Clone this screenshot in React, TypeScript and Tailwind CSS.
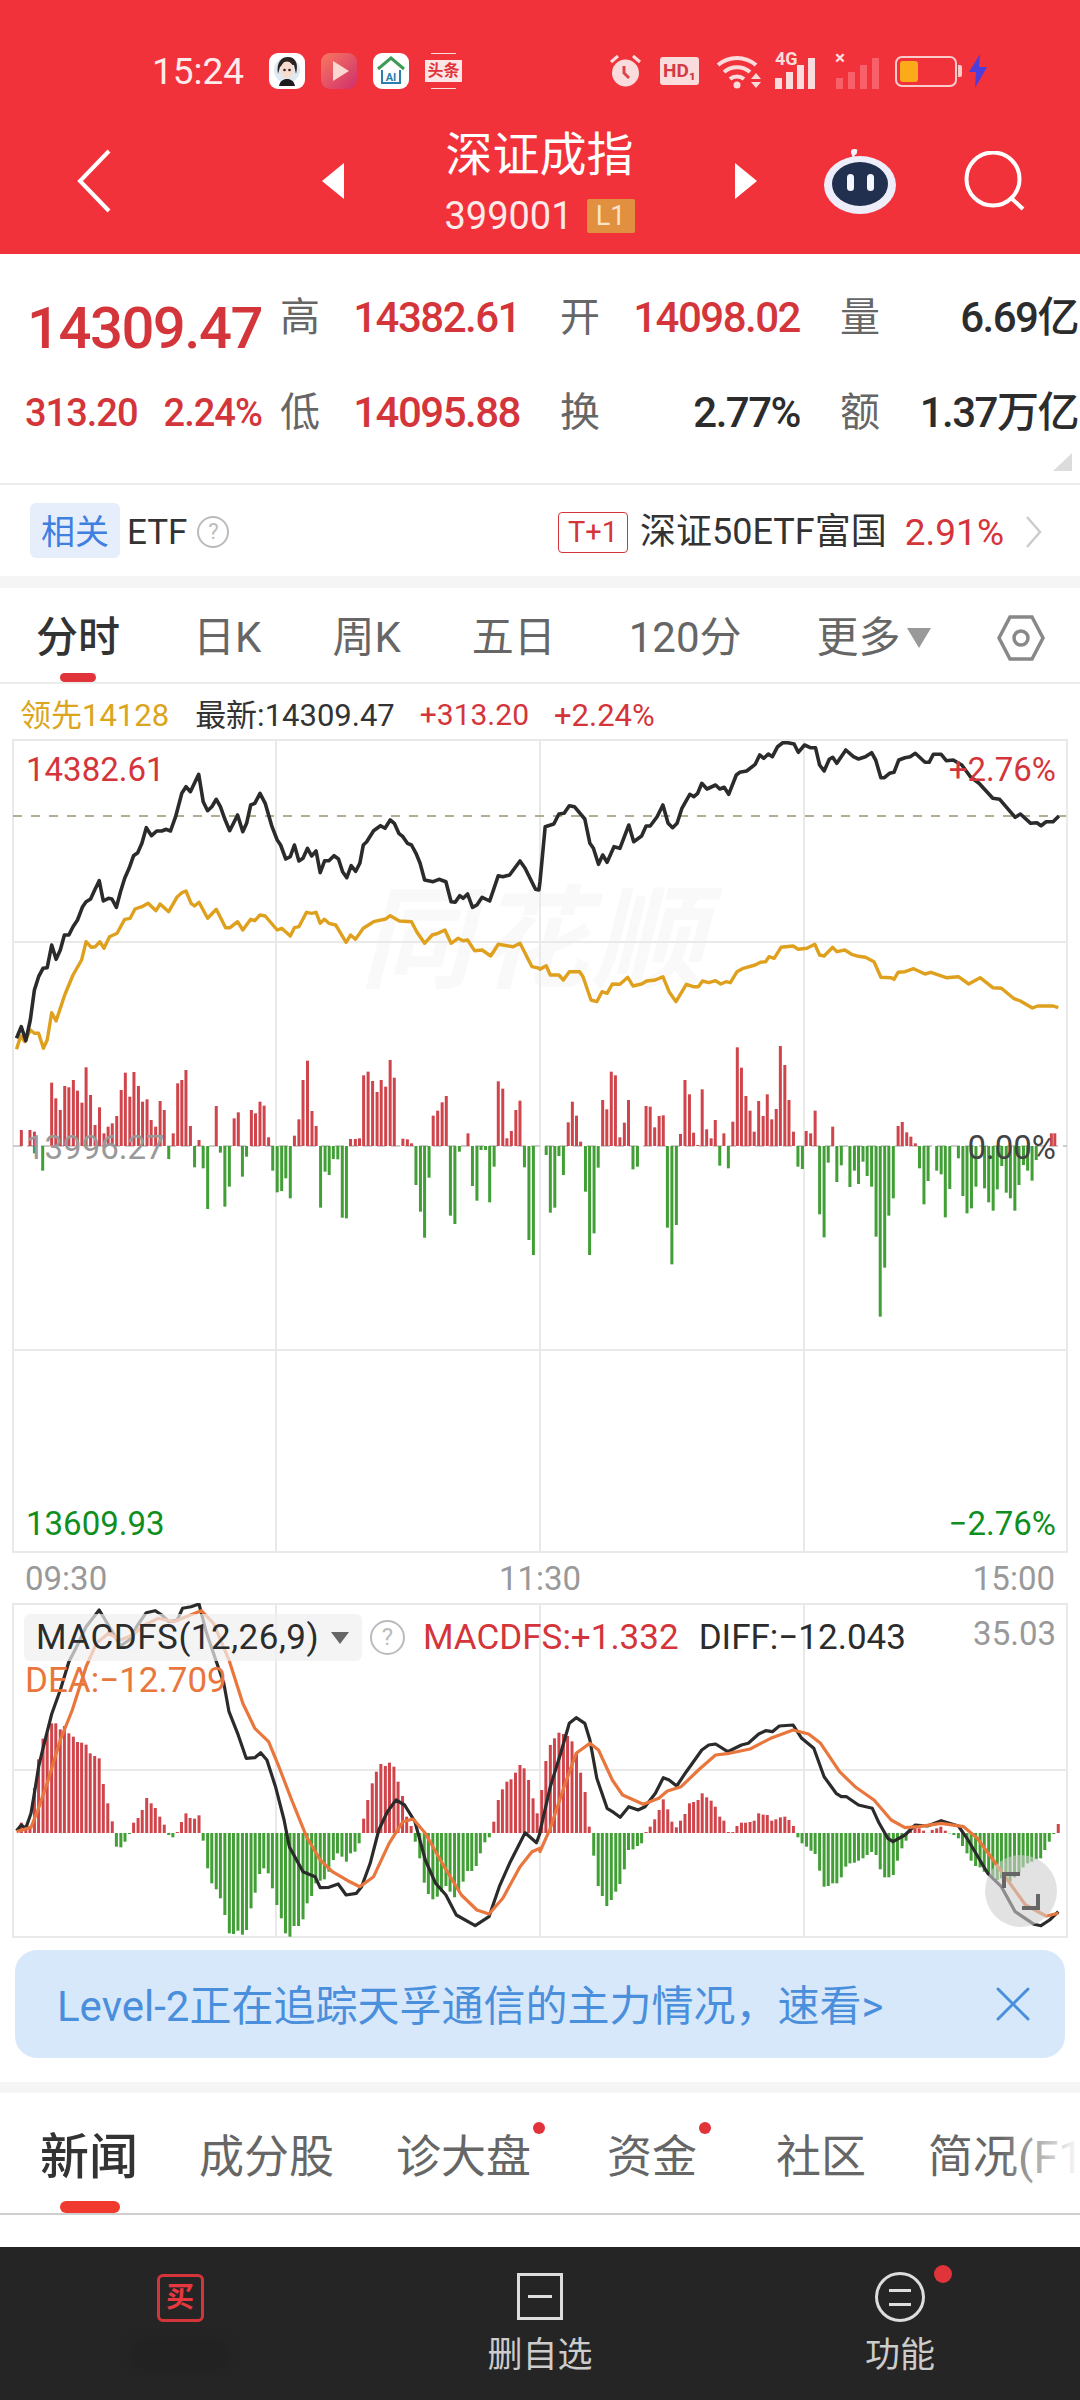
import { X } from "lucide-react";

// all chart data is flat [x, y, x, y...] read from the crops, scale 2.904 across and 3 down
const SX = 2.904;
const SY = 3;

const line = (flat: number[], x0: number, y0: number) => {
  const out: string[] = [];
  for (let i = 0; i < flat.length; i += 2) {
    out.push(`${(x0 + flat[i] / SX).toFixed(1)},${(y0 + flat[i + 1] / SY).toFixed(1)}`);
  }
  return out.join(" ");
};

const priceA = [48,1015,62,980,75,1022,88,960,100,870,112,830,125,805,137,803,150,735,163,778,175,750,187,705,200,705,212,680,225,660,240,620,250,605,263,597,275,570,288,542,300,603,315,595,325,597,338,622,350,575,362,535,375,505,388,467,400,458,412,430,425,383,440,407,455,393,470,393,483,388,495,393,510,350,528,280,540,260,553,275,577,223,590,305,603,332,615,320,628,298,640,320,653,358,667,392,690,345,705,395,716,370,728,315,740,310,755,280,770,310,790,380,805,420,815,435,830,477,843,470,855,435,868,483,880,475,893,445,905,468,918,453,930,518,943,482,955,482,970,467,983,477,995,515,1007,533,1020,497,1033,514,1045,490,1055,435,1065,425,1085,392,1105,377,1118,385,1133,360,1145,370,1158,400,1170,410,1183,430,1195,435,1208,460,1220,490,1233,540,1258,545,1275,538,1295,545,1310,605,1322,607,1335,587,1345,595,1358,582,1372,622,1385,615,1400,592,1422,603,1447,527,1460,530,1480,525,1510,483,1525,505,1555,568,1565,570];
const priceB = [0,545,15,380,40,372,55,342,70,340,85,317,100,320,130,357,145,430,155,445,170,493,182,465,195,487,215,440,232,445,258,375,272,425,295,408,308,378,320,378,340,350,357,315,372,370,385,383,398,370,412,325,435,283,447,290,458,280,470,250,485,267,510,255,522,267,535,262,548,283,570,225,580,217,600,213,625,193,638,165,650,175,663,162,675,170,690,140,705,128,720,128,738,132,750,157,768,135,785,143,800,143,812,195,825,213,840,178,850,172,862,190,888,150,910,170,925,177,945,170,963,158,975,180,990,233,1000,233,1015,220,1028,217,1042,180,1060,173,1075,170,1090,160,1118,187,1130,187,1142,163,1165,163,1180,182,1200,180,1225,195,1250,230,1275,250,1315,295,1335,298,1380,352,1395,342,1425,370,1443,368,1455,377,1470,365,1490,365,1507,348];
const avgA = [48,1048,60,1008,72,1025,88,990,100,1000,112,1000,126,1045,137,1020,150,938,163,963,188,885,212,825,237,780,250,725,265,742,277,740,290,725,302,745,318,710,340,700,362,658,378,655,392,627,412,620,430,610,453,632,465,612,490,635,515,590,530,577,540,573,555,610,565,618,578,607,603,655,628,628,655,683,668,683,690,665,705,690,728,658,740,662,755,645,770,648,805,690,818,685,843,708,855,683,868,680,890,637,905,640,918,637,930,670,942,658,955,670,975,675,1005,727,1018,705,1032,718,1055,685,1085,665,1120,657,1133,647,1160,663,1195,665,1210,695,1233,730,1255,705,1272,700,1292,690,1310,730,1330,715,1345,722,1358,720,1378,752,1400,750,1425,768,1447,733,1490,740,1510,730,1530,770,1545,800,1568,805];
const avgB = [0,808,18,797,30,825,55,825,68,840,85,815,115,815,125,830,148,900,165,905,180,875,195,880,210,852,232,853,255,832,270,858,295,852,310,843,335,840,357,830,375,875,395,905,425,853,445,860,460,860,472,843,490,848,510,842,525,852,540,845,553,848,572,815,590,805,625,795,640,787,655,785,665,770,680,775,700,742,735,738,750,748,775,745,798,733,812,765,825,768,850,742,862,755,885,750,905,763,925,769,945,772,970,785,990,832,1020,833,1028,838,1040,817,1060,815,1085,806,1118,822,1135,817,1180,833,1215,830,1245,852,1278,833,1315,863,1340,865,1375,895,1395,903,1430,924,1445,918,1490,918,1505,923];

const volRedA = [62,1290,87,1290,100,1295,150,1148,162,1195,175,1230,188,1158,200,1162,213,1140,225,1172,238,1208,250,1102,263,1185,276,1275,289,1222,302,1300,314,1280,326,1270,339,1248,352,1170,364,1118,377,1190,389,1116,402,1158,414,1205,427,1198,439,1260,452,1280,465,1203,477,1230,503,1300,516,1150,528,1140,540,1110,553,1278,578,1320,628,1218,680,1255,692,1237,730,1230,742,1240,755,1205,767,1217,780,1312,855,1307,868,1258,880,1140,893,1082,906,1233,918,1278,1018,1317,1032,1317,1044,1315,1056,1126,1069,1115,1082,1143,1095,1176,1107,1140,1120,1160,1133,1080,1145,1133,1170,1316,1183,1318,1195,1330,1258,1247,1271,1232,1284,1207,1296,1188,1359,1300,1447,1144,1460,1166,1472,1315,1485,1293,1498,1230,1510,1202];
const volRedB = [82,1267,94,1205,106,1247,118,1325,182,1200,194,1228,207,1115,219,1126,232,1312,245,1268,257,1200,308,1218,320,1220,333,1282,346,1248,358,1246,408,1302,421,1140,434,1183,446,1298,458,1335,471,1168,484,1288,497,1315,509,1260,534,1300,560,1265,573,1042,585,1103,598,1188,610,1232,622,1295,635,1203,648,1248,660,1183,673,1258,686,1227,698,1038,711,1095,723,1200,736,1295,773,1293,786,1300,799,1232,850,1280,1040,1278,1052,1266,1065,1297,1077,1310,1090,1330,1485,1300,1495,1300];
const volGreenA = [100,70,124,122,490,87,565,112,590,115,603,237,640,68,653,230,666,170,704,140,716,80,792,122,805,187,818,183,830,145,843,205,931,233,944,125,956,135,968,87,981,88,994,263,1006,265,1208,165,1221,245,1233,323,1246,143,1308,257,1321,282,1334,65,1372,168,1385,212,1397,60,1410,60,1422,217,1435,110,1523,112,1536,330,1549,375];
const volGreenB = [18,75,30,248,43,233,55,78,68,135,132,185,144,375,157,310,169,113,270,118,283,110,370,293,383,403,396,285,522,107,547,115,749,110,762,117,812,253,825,322,837,98,862,156,875,106,900,171,913,122,925,162,938,95,950,138,963,170,976,320,988,560,1001,413,1013,257,1026,205,1102,115,1115,223,1127,153,1152,122,1165,133,1177,262,1190,177,1215,85,1228,198,1240,250,1253,235,1266,170,1291,175,1303,217,1316,242,1328,178,1341,108,1354,188,1366,205,1379,242,1391,165,1404,105,1416,122,1429,152,1441,90];

const macdBarsA = [62,698,75,708,87,708,100,594,112,508,125,446,137,430,150,400,162,400,175,418,187,408,200,430,213,440,225,456,237,458,250,464,262,490,275,498,288,505,300,582,313,640,326,694,338,770,351,772,363,755,376,732,388,698,401,684,413,660,426,624,439,640,451,654,464,680,477,704,490,735,502,742,515,726,527,696,540,670,552,684,565,686,578,676,590,752,603,835,615,880,628,898,640,925,653,975,666,1030,678,1032,691,1022,704,1034,716,1020,729,955,741,908,754,852,766,835,779,850,791,895,804,945,817,985,829,1030,842,1040,854,1008,867,1008,880,988,892,940,905,918,917,880,930,872,942,868,955,845,968,810,980,790,993,800,1006,815,1018,790,1031,785,1043,760,1056,686,1068,630,1081,580,1093,545,1106,522,1119,528,1131,518,1144,530,1156,575,1169,618,1181,680,1194,708,1206,755,1219,805,1232,878,1244,912,1257,928,1270,920,1282,905,1295,888,1307,905,1320,922,1332,900,1345,875,1358,843,1370,843,1383,828,1395,790,1408,757,1421,742,1434,695,1447,630,1459,598,1472,575,1484,568,1497,548,1510,525,1522,535,1535,570,1548,625,1560,670];
const macdBarsB = [5,600,17,513,30,465,42,445,55,428,68,432,80,438,93,454,106,490,118,548,131,606,143,710,156,797,169,888,181,918,194,948,207,930,220,905,232,882,245,838,257,780,270,778,283,768,295,760,308,726,320,710,333,688,346,660,358,628,371,658,383,695,396,712,408,692,421,672,434,640,446,636,459,630,471,610,484,622,497,632,509,650,522,680,534,692,547,726,560,726,572,708,585,698,597,698,610,696,622,692,635,670,648,674,660,675,673,692,685,688,698,682,711,680,723,690,736,708,749,742,761,760,774,770,787,782,799,792,812,842,825,890,837,888,850,880,862,880,875,862,888,830,900,820,913,818,925,812,938,805,950,795,963,786,976,795,988,838,1001,862,1013,862,1026,855,1038,812,1051,775,1063,752,1076,722,1089,708,1101,715,1114,722,1139,720,1152,715,1164,710,1177,722,1190,730,1202,735,1215,745,1227,768,1240,790,1252,812,1265,828,1278,832,1290,845,1303,855,1315,860,1328,870,1340,865,1353,860,1365,875,1378,862,1391,848,1403,832,1416,820,1428,815,1441,808,1454,805,1466,780,1479,755,1492,732,1505,702];

const diffA = [48,722,62,705,75,715,90,670,100,610,112,530,125,475,150,372,175,300,200,215,225,165,250,110,288,60,320,115,350,168,375,150,400,105,425,68,450,62,470,75,490,95,515,90,530,55,555,50,578,42,600,130,630,220,650,280,665,365,690,430,715,505,740,503,757,488,775,510,800,590,825,690,840,770,880,845,915,860,930,893,955,892,982,882,1005,915,1035,910,1050,890,1075,820,1100,720,1125,665,1150,630,1175,645,1205,695,1235,810,1265,880,1295,915,1325,975,1380,1007,1420,980,1450,890,1480,820,1525,728,1558,758,1568,730];
const diffB = [0,725,30,590,60,490,85,400,105,383,130,400,145,450,165,565,195,655,215,668,233,682,258,650,285,660,305,650,335,610,358,563,375,570,397,588,425,545,470,480,490,465,510,462,545,485,585,465,605,460,635,432,655,422,675,425,695,408,735,405,760,445,795,475,825,560,860,610,875,620,890,620,925,645,965,655,985,700,1010,745,1025,755,1060,735,1090,705,1125,708,1165,692,1215,708,1240,745,1300,850,1340,890,1380,965,1435,1003,1455,1007,1480,990,1505,965];
const deaA = [48,725,90,712,110,660,140,570,175,450,210,360,250,230,280,160,315,130,350,150,385,135,420,105,460,85,505,95,540,80,585,62,620,100,665,210,705,340,740,415,780,455,810,530,845,625,890,740,930,810,965,845,1010,872,1045,890,1085,860,1130,760,1170,695,1200,687,1235,730,1290,830,1340,915,1385,960,1420,972,1460,925,1510,830,1545,785,1568,775];
const deaB = [0,785,30,715,70,590,105,490,145,460,170,480,210,570,240,615,300,643,345,625,370,603,410,590,460,540,510,495,550,490,610,477,670,445,735,420,780,432,815,460,870,545,915,590,970,630,1020,690,1060,713,1100,710,1165,700,1230,710,1270,745,1330,830,1410,945,1470,978,1505,970];

// one rect per pair, red above the base and green below it
const Bars = ({ data, x0, y0, base }: { data: number[]; x0: number; y0: number; base: number }) => {
  const rects = [];
  for (let i = 0; i < data.length; i += 2) {
    const y = y0 + data[i + 1] / SY;
    rects.push(
      <rect
        key={i}
        x={x0 + data[i] / SX - 1.5}
        y={Math.min(y, base)}
        width={3}
        height={Math.abs(y - base)}
        fill={y < base ? "#d0454b" : "#419f36"}
      />
    );
  }
  return <>{rects}</>;
};

const StatusBar = () => (
  <div className="flex items-center h-[100px] pt-[42px] pl-[152px] pr-[92px]">
    <span className="text-[37px] leading-none text-[#fdeaea] w-[93px]">15:24</span>
    <div className="flex items-center gap-[16px] ml-[24px]">
      <svg width="36" height="36" viewBox="0 0 36 36">
        <rect width="36" height="36" rx="9" fill="#fff" />
        <circle cx="18" cy="17" r="13" fill="#dfe9f2" />
        <path d="M9 21c-2-11 3-17 10-17s11 6 8 17l-2-9c-4 0-8-1-10-3-1 3-3 4-4 5z" fill="#2b2422" />
        <ellipse cx="18" cy="17" rx="6.5" ry="8.5" fill="#f9dcd0" />
        <circle cx="15.5" cy="17" r="1.3" fill="#2b2422" />
        <circle cx="20.5" cy="17" r="1.3" fill="#2b2422" />
        <path d="M10 33c1-5 4-7 8-7s7 2 8 7z" fill="#1d1d1f" />
      </svg>
      <svg width="36" height="36" viewBox="0 0 36 36">
        <defs>
          <linearGradient id="play" x1="0" y1="0" x2="1" y2="1">
            <stop offset="0" stopColor="#f9785f" />
            <stop offset="1" stopColor="#cf2f6e" />
          </linearGradient>
        </defs>
        <rect width="36" height="36" rx="9" fill="url(#play)" />
        <path d="M12 8l16 10-16 10z" fill="#fcd6d0" />
      </svg>
      <svg width="36" height="36" viewBox="0 0 36 36">
        <rect width="36" height="36" rx="9" fill="#fff" />
        <path d="M5 16L18 5l13 11" fill="none" stroke="#3f9a58" strokeWidth="3" />
        <path d="M9 17v13h18V17" fill="none" stroke="#2a7fb0" strokeWidth="2" />
        <text x="18" y="28" textAnchor="middle" fontSize="11" fontWeight="700" fill="#2a7fb0">AI</text>
      </svg>
      <div className="relative w-[37px] h-[36px] rounded-[9px] flex items-center justify-center">
        <div className="absolute top-0 left-[6px] right-[6px] h-[1px] bg-[#fbdcdc]" />
        <div className="absolute bottom-0 left-[6px] right-[6px] h-[1px] bg-[#fbdcdc]" />
        <span className="w-[37px] h-[22px] bg-[#fde6e6] text-[#e0343c] text-[16px] leading-[22px] font-bold text-center">头条</span>
      </div>
    </div>
    <div className="flex items-center ml-auto">
      <svg width="33" height="34" viewBox="0 0 33 34">
        <circle cx="16.5" cy="19" r="13.5" fill="#fbdcdc" />
        <path d="M2 8l7-6M31 8l-7-6" stroke="#fbdcdc" strokeWidth="3" />
        <path d="M15 12v7l5 5" fill="none" stroke="#d9434c" strokeWidth="3" />
      </svg>
      <span className="ml-[18px] w-[39px] h-[28px] rounded-[3px] bg-[#fbdcdc] text-[#d23a44] text-[19px] leading-[28px] font-bold text-center">HD₁</span>
      <svg className="ml-[18px]" width="45" height="36" viewBox="0 0 45 36">
        <path d="M1 12a29 29 0 0 1 38 0M7 19a20 20 0 0 1 26 0M13 26a11 11 0 0 1 14 0" fill="none" stroke="#fbdcdc" strokeWidth="4" />
        <circle cx="20" cy="32" r="3.5" fill="#fbdcdc" />
        <path d="M39 20l5 6H34zM34 29h10l-5 6z" fill="#fbdcdc" />
      </svg>
      <div className="relative ml-[13px] w-[47px] h-[36px]">
        <span className="absolute left-0 top-[-4px] text-[18px] leading-[20px] font-bold text-[#fbdcdc]">4G</span>
        <div className="absolute bottom-0 left-0 flex items-end gap-[4px]">
          <i className="block w-[7px] h-[11px] bg-[#fbdcdc]" />
          <i className="block w-[7px] h-[17px] bg-[#fbdcdc]" />
          <i className="block w-[7px] h-[24px] bg-[#fbdcdc]" />
          <i className="block w-[7px] h-[31px] bg-[#fbdcdc]" />
        </div>
      </div>
      <div className="relative ml-[14px] w-[44px] h-[36px]">
        <span className="absolute left-[-1px] top-[-5px] text-[19px] leading-[20px] font-bold text-[#fbdcdc]">×</span>
        <div className="absolute bottom-0 left-0 flex items-end gap-[5px]">
          <i className="block w-[7px] h-[11px] bg-[#f8606a]" />
          <i className="block w-[7px] h-[17px] bg-[#f8606a]" />
          <i className="block w-[7px] h-[24px] bg-[#f8606a]" />
          <i className="block w-[7px] h-[31px] bg-[#f8606a]" />
        </div>
      </div>
      <div className="flex items-center ml-[15px]">
        <div className="w-[62px] h-[31px] rounded-[7px] border-2 border-[#fbcaca] p-[3px]">
          <div className="w-[18px] h-full rounded-[3px] bg-[#fbab1a]" />
        </div>
        <div className="w-[4px] h-[12px] ml-[1px] bg-[#fbcaca] rounded-r-[2px]" />
      </div>
      <svg className="ml-[6px]" width="20" height="34" viewBox="0 0 20 34">
        <path d="M12 0L1 18h7l-1 16 12-21h-8z" fill="#4d3ddb" />
      </svg>
    </div>
  </div>
);

const HeaderNav = () => (
  <div className="flex items-center h-[154px] pt-[8px] pl-[76px]">
    <svg width="36" height="64" viewBox="0 0 36 64">
      <path d="M33 2L4 32l29 30" fill="none" stroke="#fff" strokeWidth="4" />
    </svg>
    <svg className="ml-[210px]" width="22" height="36" viewBox="0 0 22 36">
      <path d="M22 0v36L0 18z" fill="#fff" />
    </svg>
    <div className="w-[391px] flex flex-col items-center text-white">
      <span className="text-[47px] leading-[58px]">深证成指</span>
      <div className="flex items-center gap-[14px] mt-[12px]">
        <span className="text-[38px] leading-[40px] text-[#fdeaea]">399001</span>
        <span className="w-[48px] h-[34px] rounded-[2px] bg-[#e0903f] text-[#fbe3c8] text-[27px] leading-[34px] text-center">L1</span>
      </div>
    </div>
    <svg width="22" height="36" viewBox="0 0 22 36">
      <path d="M0 0v36l22-18z" fill="#fff" />
    </svg>
    <svg className="ml-[67px]" width="72" height="66" viewBox="0 0 72 66">
      <path d="M30 9c-3-5 0-8 3-6" fill="none" stroke="#e8e8f8" strokeWidth="2.5" />
      <circle cx="30" cy="4" r="3" fill="#f2f2fb" />
      <ellipse cx="36" cy="37" rx="36" ry="29" fill="#eeeefb" />
      <ellipse cx="36" cy="36" rx="28" ry="22" fill="#22304f" />
      <rect x="23" y="26" width="7" height="17" rx="3.5" fill="#f4f6ff" />
      <rect x="43" y="26" width="7" height="17" rx="3.5" fill="#f4f6ff" />
    </svg>
    <svg className="ml-[68px]" width="62" height="60" viewBox="0 0 62 60">
      <circle cx="29" cy="28" r="26.5" fill="none" stroke="#fff" strokeWidth="4" />
      <path d="M46 46l13 12" stroke="#fff" strokeWidth="4" />
    </svg>
  </div>
);

const Stat = ({ label, value, dark, className }: { label: string; value: string; dark?: boolean; className?: string }) => (
  <div className={`flex items-center justify-between ${className ?? ""}`}>
    <span className="text-[40px] leading-none text-[#666666]">{label}</span>
    <span className={`text-[42px] leading-none font-medium tracking-[-1.5px] ${dark ? "text-[#2c2c2c]" : "text-[#d4353a]"}`}>{value}</span>
  </div>
);

const Quote = () => (
  <div className="relative h-[231px] pt-[18px] border-b-2 border-[#ececec]">
    <div className="flex items-center h-[92px]">
      <div className="w-[280px] pl-[27px]">
        <span className="block mt-[20px] text-[58px] leading-none font-medium tracking-[-1.5px] text-[#d4353a]">14309.47</span>
      </div>
      <Stat className="w-[240px]" label="高" value="14382.61" />
      <Stat className="w-[240px] ml-[40px]" label="开" value="14098.02" />
      <Stat className="w-[238px] ml-[40px]" label="量" value="6.69亿" dark />
    </div>
    <div className="flex items-center h-[98px]">
      <div className="w-[280px] pl-[25px] flex gap-[26px] text-[38px] leading-none font-medium tracking-[-1px] text-[#d4353a]">
        <span>313.20</span>
        <span>2.24%</span>
      </div>
      <Stat className="w-[240px]" label="低" value="14095.88" />
      <Stat className="w-[240px] ml-[40px]" label="换" value="2.77%" dark />
      <Stat className="w-[238px] ml-[40px]" label="额" value="1.37万亿" dark />
    </div>
    <svg className="absolute right-[8px] bottom-[12px]" width="19" height="18" viewBox="0 0 19 18">
      <path d="M19 0v18H0z" fill="#dcdcdc" />
    </svg>
  </div>
);

const Related = () => (
  <div className="flex items-center h-[91px] pt-[3px] pl-[30px] pr-[38px]">
    <span className="w-[90px] h-[55px] mb-[3px] rounded-[6px] bg-[#e6eefc] text-[#3f7fe0] text-[34px] leading-[58px] text-center">相关</span>
    <span className="ml-[7px] text-[35px] leading-none text-[#333333]">ETF</span>
    <span className="ml-[10px] w-[32px] h-[32px] rounded-full border-2 border-[#bbbbbb] text-[#bbbbbb] text-[22px] leading-[28px] text-center">?</span>
    <span className="ml-auto w-[70px] h-[41px] rounded-[4px] border border-[#d4353a] text-[#d4353a] text-[29px] leading-[39px] text-center">T+1</span>
    <span className="ml-[12px] text-[36px] leading-none text-[#333333]">深证50ETF富国</span>
    <span className="ml-[18px] text-[37px] leading-none text-[#d4353a]">2.91%</span>
    <svg className="ml-[21px]" width="17" height="32" viewBox="0 0 17 32">
      <path d="M2 1l13 15L2 31" fill="none" stroke="#cccccc" strokeWidth="2.5" />
    </svg>
  </div>
);

const Periods = () => (
  <div className="relative flex items-center h-[96px] pt-[5px] border-b-2 border-[#ececec] text-[42px] leading-none text-[#666666]">
    <span className="ml-[36px] font-medium text-[#333333]">分时</span>
    <span className="ml-[73px]">日K</span>
    <span className="ml-[71px]">周K</span>
    <span className="ml-[71px]">五日</span>
    <span className="ml-[73px]">120分</span>
    <span className="ml-[75px]">更多</span>
    <svg className="ml-[6px]" width="24" height="20" viewBox="0 0 24 20">
      <path d="M0 0h24L12 20z" fill="#999999" />
    </svg>
    <svg className="ml-[66px]" width="48" height="46" viewBox="0 0 48 46">
      <path d="M13 2h22l11 21-11 21H13L2 23z" fill="none" stroke="#888888" strokeWidth="3.5" />
      <circle cx="24" cy="23" r="7" fill="none" stroke="#888888" strokeWidth="3.5" />
    </svg>
    <div className="absolute left-[60px] bottom-0 w-[36px] h-[9px] rounded-[5px] bg-[#e0333a]" />
  </div>
);

const PriceChart = () => (
  <div className="relative h-[814px]">
    <span className="absolute left-[360px] top-[146px] text-[112px] leading-none italic font-bold tracking-[4px] text-[#f9f9f9]">同花顺</span>
    <svg className="absolute inset-0" width="1080" height="814" viewBox="0 739 1080 814">
      <g stroke="#e9e9e9" strokeWidth="2" fill="none">
        <rect x="13" y="740" width="1054" height="812" />
        <path d="M276 740v812M540 740v812M804 740v812M13 942h1054M13 1350h1054" />
      </g>
      <path d="M13 816h1054" stroke="#b4ad94" strokeWidth="2" strokeDasharray="9 9" />
      <path d="M13 1146h1054" stroke="#cccccc" strokeWidth="2" strokeDasharray="9 5" />
      <Bars data={volRedA} x0={0} y0={700} base={1146} />
      <Bars data={volRedB} x0={540} y0={700} base={1146} />
      <Bars data={volGreenA} x0={0} y0={1130} base={1146} />
      <Bars data={volGreenB} x0={540} y0={1130} base={1146} />
      <polyline points={`${line(avgA, 0, 700)} ${line(avgB, 540, 700)}`} fill="none" stroke="#dfa01e" strokeWidth="3.4" strokeLinejoin="round" />
      <polyline points={`${line(priceA, 0, 700)} ${line(priceB, 540, 700)}`} fill="none" stroke="#2b2b2b" strokeWidth="3.6" strokeLinejoin="round" />
    </svg>
    <div className="absolute inset-x-[26px] top-[12px] flex justify-between text-[33px] leading-[38px] text-[#d4353a]">
      <span>14382.61</span>
      <span className="mr-[-2px]">+2.76%</span>
    </div>
    <div className="absolute inset-x-[26px] top-[390px] flex justify-between text-[33px] leading-[38px]">
      <span className="text-[#999999]">13996.27</span>
      <span className="mr-[-2px] text-[#444444]">0.00%</span>
    </div>
    <div className="absolute inset-x-[26px] bottom-[10px] flex justify-between text-[33px] leading-[38px] text-[#0f8f1f]">
      <span>13609.93</span>
      <span className="mr-[-2px]">−2.76%</span>
    </div>
  </div>
);

const MacdChart = () => (
  <div className="relative h-[336px]">
    <svg className="absolute inset-0" width="1080" height="336" viewBox="0 1603 1080 336">
      <g stroke="#e9e9e9" strokeWidth="2" fill="none">
        <rect x="13" y="1604" width="1054" height="333" />
        <path d="M276 1604v333M540 1604v333M804 1604v333M13 1770h1054" />
      </g>
      <Bars data={macdBarsA} x0={0} y0={1590} base={1833} />
      <Bars data={macdBarsB} x0={540} y0={1590} base={1833} />
      <polyline points={`${line(diffA, 0, 1590)} ${line(diffB, 540, 1590)}`} fill="none" stroke="#2b2b2b" strokeWidth="3.2" strokeLinejoin="round" />
      <polyline points={`${line(deaA, 0, 1590)} ${line(deaB, 540, 1590)}`} fill="none" stroke="#e9763c" strokeWidth="3.2" strokeLinejoin="round" />
    </svg>
    <div className="absolute left-[24px] top-[11px] flex items-center">
      <div className="flex items-center w-[338px] h-[47px] rounded-[6px] bg-[#efefef]/70 pl-[12px]">
        <span className="text-[35px] leading-none tracking-[0.5px] text-[#2c2c2c]">MACDFS(12,26,9)</span>
        <svg className="ml-[12px]" width="18" height="12" viewBox="0 0 18 12">
          <path d="M0 0h18L9 12z" fill="#666666" />
        </svg>
      </div>
      <span className="ml-[8px] w-[35px] h-[35px] rounded-full border-2 border-[#bbbbbb] text-[#bbbbbb] text-[24px] leading-[31px] text-center">?</span>
      <span className="ml-[18px] text-[35px] leading-none text-[#d4353a]">MACDFS:+1.332</span>
      <span className="ml-[20px] text-[35px] leading-none text-[#2c2c2c]">DIFF:−12.043</span>
    </div>
    <span className="absolute right-[24px] top-[12px] text-[33px] leading-[38px] text-[#999999]">35.03</span>
    <span className="absolute left-[25px] top-[59px] text-[35px] leading-[38px] text-[#e9763c]">DEA:−12.709</span>
    <div className="absolute left-[985px] top-[252px] w-[72px] h-[72px] rounded-full bg-[#cfcfcf]/60 flex items-center justify-center">
      <svg width="38" height="38" viewBox="0 0 38 38">
        <path d="M2 16V2h16M36 22v14H20" fill="none" stroke="#666666" strokeWidth="4" />
      </svg>
    </div>
  </div>
);

const Tab = ({ label, className, active, dot }: { label: string; className?: string; active?: boolean; dot?: boolean }) => (
  <span className={`relative leading-none ${active ? "text-[49px] font-medium text-[#333333]" : "text-[45px] text-[#666666]"} ${className ?? ""}`}>
    {label}
    {dot && <i className="absolute right-[-14px] top-[-13px] w-[12px] h-[12px] rounded-full bg-[#e0333a]" />}
  </span>
);

const NewsTabs = () => (
  <div className="relative flex items-center h-[122px] pt-[8px] border-b-2 border-[#cfcfcf] overflow-hidden whitespace-nowrap">
    <Tab className="ml-[40px]" label="新闻" active />
    <Tab className="ml-[61px]" label="成分股" />
    <Tab className="ml-[62px]" label="诊大盘" dot />
    <Tab className="ml-[76px]" label="资金" dot />
    <Tab className="ml-[79px]" label="社区" />
    <Tab className="ml-[62px]" label="简况(F10)" />
    <div className="absolute right-0 inset-y-0 w-[80px] bg-linear-to-l from-white to-transparent" />
    <div className="absolute left-[60px] bottom-0 w-[60px] h-[12px] rounded-[6px] bg-[#f0392f]" />
  </div>
);

const BottomBar = () => (
  <div className="grid grid-cols-3 h-[153px] bg-[#252525]">
    <div className="flex flex-col items-center pt-[27px]">
      <span className="w-[47px] h-[48px] rounded-[6px] border-[3px] border-[#d4353a] text-[#e8383f] text-[28px] leading-[42px] text-center font-bold">买</span>
      <div className="mt-[16px] w-[100px] h-[32px] rounded-full bg-[#222222] blur-[4px]" />
    </div>
    <div className="flex flex-col items-center pt-[26px]">
      <div className="w-[46px] h-[47px] border-[3px] border-[#dddddd] flex items-center justify-center">
        <i className="block w-[24px] h-[3px] bg-[#dddddd]" />
      </div>
      <span className="mt-[18px] text-[35px] leading-none text-[#cccccc]">删自选</span>
    </div>
    <div className="flex flex-col items-center pt-[25px]">
      <div className="relative w-[50px] h-[50px] rounded-full border-[3px] border-[#dddddd] flex flex-col items-center justify-center gap-[11px]">
        <i className="block w-[22px] h-[3px] bg-[#dddddd]" />
        <i className="block w-[22px] h-[3px] bg-[#dddddd]" />
        <i className="absolute right-[-30px] top-[-10px] w-[18px] h-[18px] rounded-full bg-[#e0333a]" />
      </div>
      <span className="mt-[16px] text-[35px] leading-none text-[#cccccc]">功能</span>
    </div>
  </div>
);

const App = () => {
  return (
    <div className="w-[1080px] h-[2400px] overflow-hidden bg-white font-[Roboto,'Noto_Sans_CJK_SC',sans-serif]">
      <div className="bg-[#f2323b] h-[254px]">
        <StatusBar />
        <HeaderNav />
      </div>
      <Quote />
      <Related />
      <div className="h-[12px] bg-[#f5f5f5]" />
      <Periods />
      <div className="flex items-center h-[55px] pt-[7px] pl-[20px] text-[31px] leading-none">
        <span className="text-[#dba520]">领先14128</span>
        <span className="ml-[26px] text-[#333333]">最新:14309.47</span>
        <span className="ml-[25px] text-[30px] text-[#d4353a]">+313.20</span>
        <span className="ml-[25px] text-[31px] text-[#d4353a]">+2.24%</span>
      </div>
      <PriceChart />
      <div className="flex justify-between items-center h-[50px] px-[25px] text-[33px] leading-none text-[#999999]">
        <span>09:30</span>
        <span>11:30</span>
        <span>15:00</span>
      </div>
      <MacdChart />
      <div className="flex items-center justify-between h-[108px] mt-[11px] mx-[15px] pl-[42px] pr-[22px] rounded-[22px] bg-[#d8e8fb] text-[#4a8fdc]">
        <span className="pt-[5px] text-[42px] leading-none">Level-2正在追踪天孚通信的主力情况，速看&gt;</span>
        <X size={60} strokeWidth={3} absoluteStrokeWidth />
      </div>
      <div className="h-[11px] mt-[24px] bg-[#f5f5f5]" />
      <NewsTabs />
      <div className="h-[32px]" />
      <BottomBar />
    </div>
  );
};

export default App;
